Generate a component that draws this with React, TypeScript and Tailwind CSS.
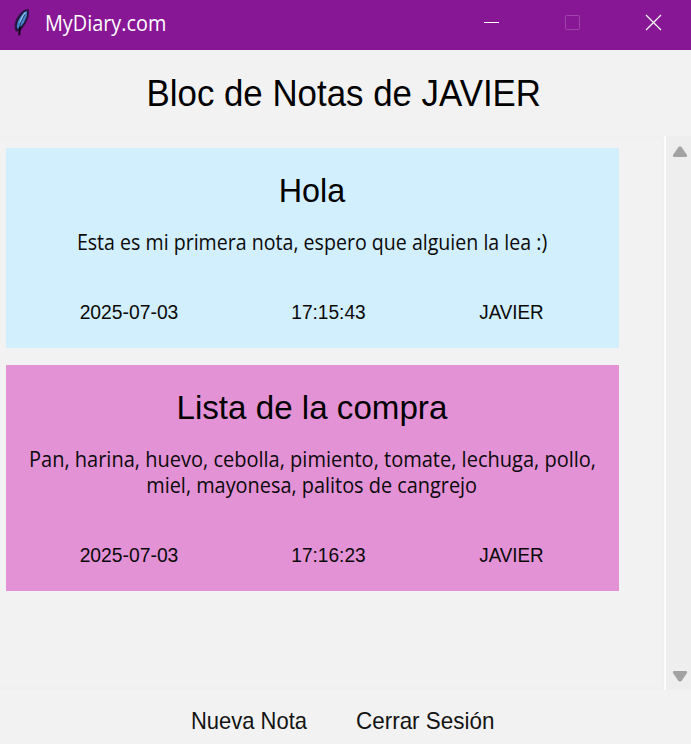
import React from "react";

type Note = {
  title: string;
  titleClass: string;
  lines: { text: string; className: string }[];
  time: string;
  cardClass: string;
};

const notes: Note[] = [
  {
    title: "Hola",
    titleClass: "scale-x-[0.95]",
    lines: [{ text: "Esta es mi primera nota, espero que alguien la lea :)", className: "scale-x-[0.933]" }],
    time: "17:15:43",
    cardClass: "h-[199.5px] bg-[#d2effe]",
  },
  {
    title: "Lista de la compra",
    titleClass: "scale-x-[0.975]",
    lines: [
      { text: "Pan, harina, huevo, cebolla, pimiento, tomate, lechuga, pollo,", className: "scale-x-[0.953]" },
      { text: "miel, mayonesa, palitos de cangrejo", className: "scale-x-[0.947]" },
    ],
    time: "17:16:23",
    cardClass: "h-[225.5px] bg-[#e492d6]",
  },
];

function Feather() {
  return (
    <svg className="ml-3 h-[30px] w-5 shrink-0" viewBox="0 0 20 30" fill="none">
      <path d="M16.5 1.2 11.5 2.5 8 6 4.5 11 3 16 3.2 22 5 23.5 9 21.5 13.5 15.5 16.5 8Z" fill="#24133d" stroke="#3a1450" strokeWidth="0.8" strokeLinejoin="round" />
      <path d="M15 3 12 4.2 9 8 6 13 4.8 18 5.5 21 8.5 19 12 14.5 14.8 8Z" fill="#4585cc" />
      <path d="M14.3 3.5 11.8 5.5 9 10 7.2 15.5 9 14 11.5 9Z" fill="#9cc6ee" />
      <path d="M12.8 6.5 8.6 15 7.3 20.5" stroke="#1f3f70" strokeWidth="1" />
      <path d="M8 18.5 7.3 27.2" stroke="#08080f" strokeWidth="1.8" />
    </svg>
  );
}

function TitleBar() {
  return (
    <header className="flex h-[50px] items-start bg-[#881796] text-white">
      <div className="flex h-[46px] flex-1 items-center">
        <Feather />
        <span className="ml-[13px] origin-left scale-x-[0.945] font-['Open_Sans','Noto_Sans',sans-serif] text-[21px] leading-[28px] whitespace-nowrap">
          MyDiary.com
        </span>
      </div>
      <div className="flex h-[45px] items-center">
        <svg className="w-[81px]" height="45" viewBox="0 0 81 45" shapeRendering="crispEdges">
          <rect x="33" y="22" width="15" height="1" fill="#fff" />
        </svg>
        <svg className="w-[81px]" height="45" viewBox="0 0 81 45">
          <rect x="33.5" y="15.5" width="14" height="14" rx="1" fill="none" stroke="#a043ab" />
        </svg>
        <svg className="w-[78px]" height="45" viewBox="0 0 78 45">
          <path d="M33 15 48 30M48 15 33 30" stroke="#fff" strokeWidth="1.2" />
        </svg>
      </div>
    </header>
  );
}

function NoteCard({ note }: { note: Note }) {
  return (
    <article className={"flex w-[613px] flex-col items-center " + note.cardClass}>
      <h2 className={"mt-[22px] mr-[2px] text-[34px] leading-[40px] whitespace-nowrap " + note.titleClass}>{note.title}</h2>
      <div className="mt-[19px] mr-px flex flex-col items-center font-['Open_Sans','Noto_Sans',sans-serif] text-[21px] leading-[26px] text-[#0a0a0a]">
        {note.lines.map((line) => (
          <p key={line.text} className={"whitespace-nowrap " + line.className}>{line.text}</p>
        ))}
      </div>
      <footer className="mt-auto mb-[23.5px] grid w-full grid-cols-[246px_153px_213px] text-[20px] leading-[24px] text-[#0a0a0a]">
        <span className="scale-x-[0.965] text-center">2025-07-03</span>
        <span className="scale-x-[0.955] text-center">{note.time}</span>
        <span className="scale-x-[0.94] text-center">JAVIER</span>
      </footer>
    </article>
  );
}

export default function App() {
  return (
    <main className="flex h-[744px] w-[691px] flex-col overflow-hidden bg-[#f2f2f2] font-['Liberation_Sans',Arial,sans-serif] text-black">
      <TitleBar />
      <div className="flex h-[86px] items-center justify-center pt-[2px] pr-[4px]">
        <h1 className="scale-x-[0.968] text-[36px] leading-[42px] whitespace-nowrap">Bloc de Notas de JAVIER</h1>
      </div>
      <section className="flex h-[554px]">
        <div className="flex w-[664px] flex-col gap-[17.5px] border-y-[3px] border-r-[3px] border-[#f0f0f0] pt-[9px] pl-[6px]">
          {notes.map((note) => (
            <NoteCard key={note.title} note={note} />
          ))}
        </div>
        <div className="w-[2px] bg-[#fcfcfc]" />
        <div className="flex w-[25px] flex-col items-center justify-between bg-[#eeeeee] pt-[10px] pb-[8px] pl-[3px]">
          <svg width="16" height="12" viewBox="0 0 16 12">
            <path d="M7 1H9L14.5 9V10.5H1.5V9Z" fill="#a3a3a3" stroke="#a3a3a3" strokeLinejoin="round" />
          </svg>
          <svg width="16" height="12" viewBox="0 0 16 12">
            <path d="M1.5 1.5H14.5V3L9 11H7L1.5 3Z" fill="#a3a3a3" stroke="#a3a3a3" strokeLinejoin="round" />
          </svg>
        </div>
      </section>
      <nav className="flex flex-1 items-center pt-[8px] pl-[191px] text-[24px] leading-[28px] text-[#141414]">
        <button className="w-[127px] origin-left scale-x-[0.915] text-left whitespace-nowrap">Nueva Nota</button>
        <button className="ml-[38px] w-[150px] origin-left scale-x-[0.935] text-left whitespace-nowrap">Cerrar Sesión</button>
      </nav>
    </main>
  );
}
